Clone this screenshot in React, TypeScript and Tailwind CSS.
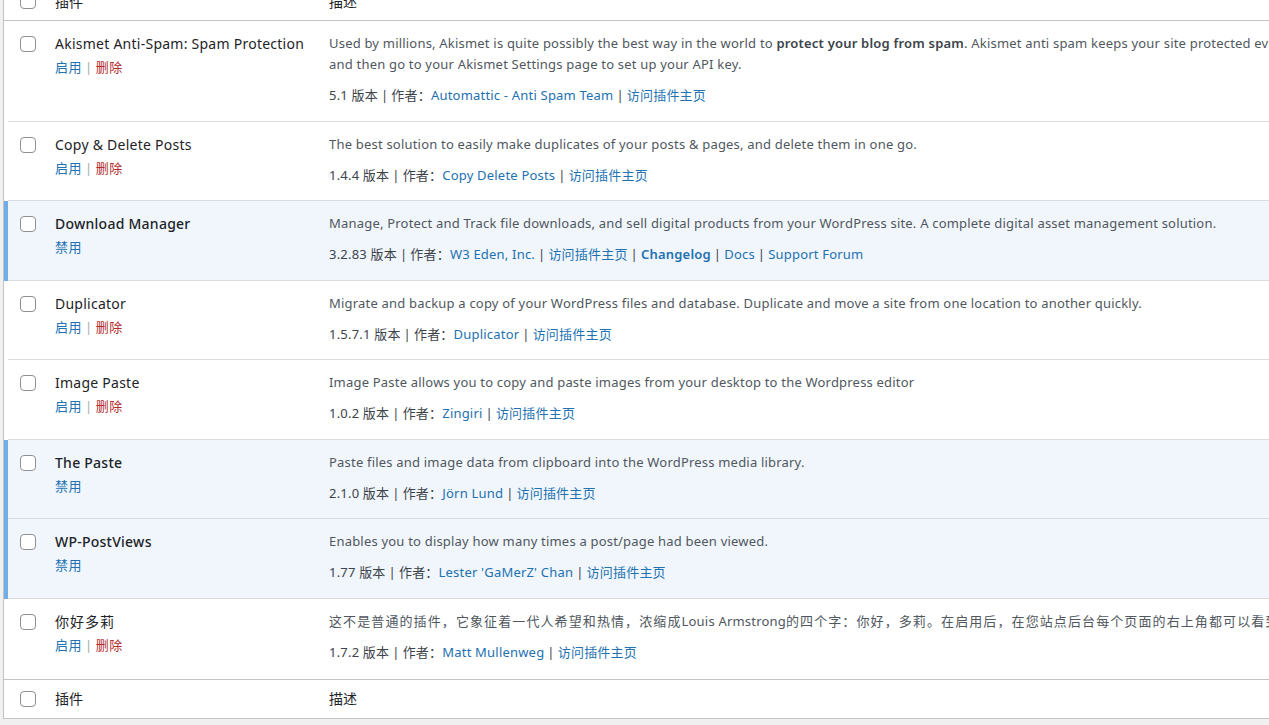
import React from "react";

interface Plugin {
  name: string;
  active: boolean;
  cjk?: boolean;
  desc: React.ReactNode;
  version: string;
  author: string;
  extra?: { label: string; bold?: boolean }[];
}

const plugins: Plugin[] = [
  {
    name: "Akismet Anti-Spam: Spam Protection",
    active: false,
    desc: (
      <>
        Used by millions, Akismet is quite possibly the best way in the world to{" "}
        <strong className="font-semibold text-[#3c434a]">protect your blog from spam</strong>. Akismet anti spam keeps
        your site protected even while you sleep. To get started: activate the Akismet plugin
        <br />
        and then go to your Akismet Settings page to set up your API key.
      </>
    ),
    version: "5.1",
    author: "Automattic - Anti Spam Team",
  },
  {
    name: "Copy & Delete Posts",
    active: false,
    desc: "The best solution to easily make duplicates of your posts & pages, and delete them in one go.",
    version: "1.4.4",
    author: "Copy Delete Posts",
  },
  {
    name: "Download Manager",
    active: true,
    desc: "Manage, Protect and Track file downloads, and sell digital products from your WordPress site. A complete digital asset management solution.",
    version: "3.2.83",
    author: "W3 Eden, Inc.",
    extra: [{ label: "Changelog", bold: true }, { label: "Docs" }, { label: "Support Forum" }],
  },
  {
    name: "Duplicator",
    active: false,
    desc: "Migrate and backup a copy of your WordPress files and database. Duplicate and move a site from one location to another quickly.",
    version: "1.5.7.1",
    author: "Duplicator",
  },
  {
    name: "Image Paste",
    active: false,
    desc: "Image Paste allows you to copy and paste images from your desktop to the Wordpress editor",
    version: "1.0.2",
    author: "Zingiri",
  },
  {
    name: "The Paste",
    active: true,
    desc: "Paste files and image data from clipboard into the WordPress media library.",
    version: "2.1.0",
    author: "Jörn Lund",
  },
  {
    name: "WP-PostViews",
    active: true,
    desc: "Enables you to display how many times a post/page had been viewed.",
    version: "1.77",
    author: "Lester 'GaMerZ' Chan",
  },
  {
    name: "你好多莉",
    active: false,
    cjk: true,
    desc: (
      <>
        <span className="tracking-[1.1px]">这不是普通的插件，它象征着一代人希望和热情，浓缩成</span>
        Louis Armstrong
        <span className="tracking-[1.1px]">
          的四个字：你好，多莉。在启用后，在您站点后台每个页面的右上角都可以看到一句来自《俏皮女人》音乐剧的台词。
        </span>
      </>
    ),
    version: "1.7.2",
    author: "Matt Mullenweg",
  },
];

const font = { fontFamily: '"Noto Sans", "Noto Sans CJK SC", sans-serif' };

function Checkbox() {
  return <div className="w-4 h-4 rounded-[4px] border border-[#8c8f94] bg-white" />;
}

function Sep({ light }: { light?: boolean }) {
  return <span className={light ? "text-[#a7aaad] mx-[3px]" : "text-[#3c434a] mx-[3px]"}>|</span>;
}

function PluginRow({ p }: { p: Plugin }) {
  return (
    <div className={`border-l-4 ${p.active ? "border-[#72aee6] bg-[#f0f6fc]" : "border-white bg-white"}`}>
      <div className={`flex border-b border-[#dcdcde] pt-3 ${p.cjk ? "pb-[16px]" : "pb-[14.5px]"}`}>
        <div className="w-[37px] shrink-0 pl-3 pt-[3px]">
          <Checkbox />
        </div>
        <div className="w-[274px] shrink-0 px-[10px]">
          <div
            className={`text-[14px] leading-[21px] text-[#1d2327] ${p.cjk ? "tracking-[1px]" : "tracking-[0.25px]"} ${
              p.active ? "font-medium" : ""
            }`}
          >
            {p.name}
          </div>
          <div className="text-[13px] leading-[21px] mt-[3px] tracking-[0.5px]">
            {p.active ? (
              <span className="text-[#2271b1]">禁用</span>
            ) : (
              <>
                <span className="text-[#2271b1]">启用</span>
                <Sep light />
                <span className="text-[#b32d2e]">删除</span>
              </>
            )}
          </div>
        </div>
        <div className="flex-1 px-[10px] text-[13px] leading-[21px] tracking-[0.2px] whitespace-nowrap">
          <div className="text-[#50575e]">{p.desc}</div>
          <div className="mt-[10px] text-[#3c434a]">
            {p.version} 版本
            <Sep />
            作者：<span className="text-[#2271b1]">{p.author}</span>
            <Sep />
            <span className="text-[#2271b1]">访问插件主页</span>
            {p.extra?.map((e) => (
              <React.Fragment key={e.label}>
                <Sep />
                <span className={`text-[#2271b1] ${e.bold ? "font-semibold" : ""}`}>{e.label}</span>
              </React.Fragment>
            ))}
          </div>
        </div>
      </div>
    </div>
  );
}

function HeadRow() {
  return (
    <div className="flex items-center h-[39px] bg-white text-[14px] text-[#1d2327] border-b border-[#c3c4c7]">
      <div className="w-[41px] shrink-0 pl-4">
        <Checkbox />
      </div>
      <div className="w-[274px] shrink-0 px-[10px]">插件</div>
      <div className="flex-1 px-[10px]">描述</div>
    </div>
  );
}

export default function App() {
  return (
    <div className="h-screen overflow-hidden bg-[#f0f0f1] pl-[3px]" style={font}>
      <div className="w-[1500px] -mt-[18px] border-l border-[#c3c4c7] bg-white">
        <HeadRow />
        {plugins.map((p) => (
          <PluginRow key={p.name} p={p} />
        ))}
        <div className="border-t border-[#c3c4c7] -mt-px">
          <HeadRow />
        </div>
      </div>
    </div>
  );
}
